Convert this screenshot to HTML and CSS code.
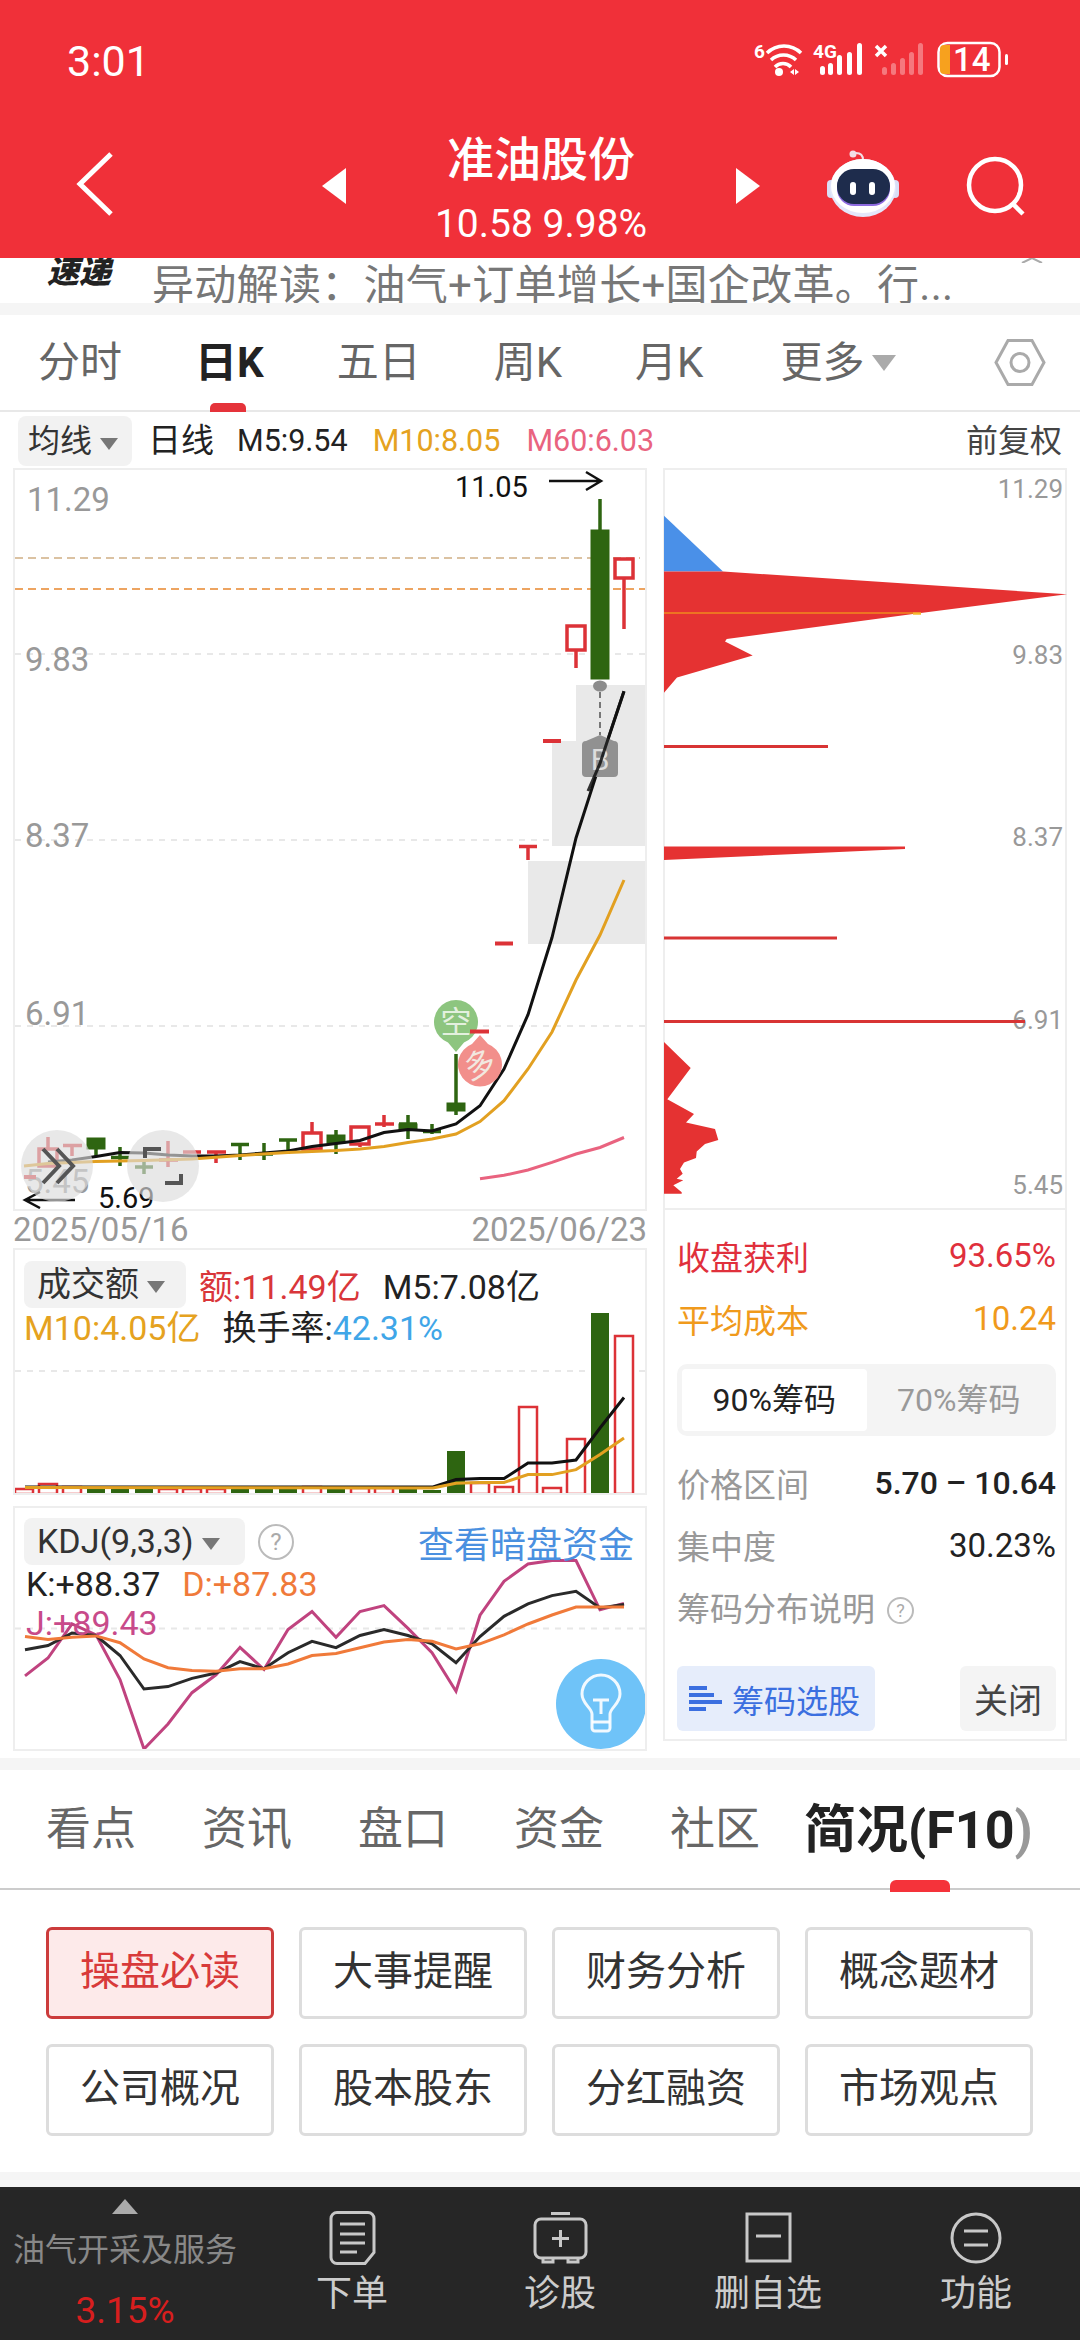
FILE: index.html
```html
<!DOCTYPE html>
<html lang="zh">
<head>
    <meta charset="UTF-8">
    <meta name="viewport" content="width=device-width, initial-scale=1.0">
    <title>准油股份</title>
    <link rel="stylesheet" href="styles.css">
</head>
<body>
<div class="page">
    <header class="app-header">
        <div class="status-bar">
            <span class="status-time">3:01</span>
            <svg class="status-icons" viewBox="754 40 255 38" width="255" height="38">
                <text class="st-small" x="754" y="58">6</text>
                <g fill="none" stroke="#fff" stroke-width="3.500">
                    <path d="M767 53 A24 24 0 0 1 801 53"/>
                    <path d="M771 60 A18 18 0 0 1 796 60"/>
                    <path d="M775 67 A11 11 0 0 1 791 67"/>
                </g>
                <circle cx="779" cy="72" r="4" fill="#fff"/>
                <path d="M790 72l4-3v6zM799 72l-4-3v6z" fill="#fff"/>
                <text class="st-small" x="813" y="58">4G</text>
                <g fill="#fff">
                    <rect x="820" y="66" width="5" height="9" rx="2.500"/>
                    <rect x="828" y="63" width="5" height="12" rx="2.500"/>
                    <rect x="837" y="55" width="5" height="20" rx="2.500"/>
                    <rect x="847" y="52" width="5" height="23" rx="2.500"/>
                    <rect x="857" y="43" width="5" height="32" rx="2.500"/>
                </g>
                <path d="M876 46l10 10M886 46l-10 10" stroke="#fff" stroke-width="3.500"/>
                <g fill="#fff" opacity="0.35">
                    <rect x="882" y="67" width="5" height="8" rx="2.500"/>
                    <rect x="891" y="63" width="5" height="12" rx="2.500"/>
                    <rect x="900" y="58" width="5" height="17" rx="2.500"/>
                    <rect x="909" y="52" width="5" height="23" rx="2.500"/>
                    <rect x="918" y="43" width="5" height="32" rx="2.500"/>
                </g>
                <rect x="938.500" y="43" width="61" height="33" rx="9" fill="none" stroke="#fff" stroke-width="2.500"/>
                <path d="M950 45v29h-6a4 4 0 0 1-4-4V49a4 4 0 0 1 4-4z" fill="#f7a11e"/>
                <text class="st-batt" x="953" y="71">14</text>
                <rect x="1005" y="54" width="3" height="11" rx="1.500" fill="#fff"/>
            </svg>
        </div>
        <nav class="nav-bar">
            <svg class="nav-back" viewBox="0 0 40 66" width="40" height="66"><path d="M35 3L4 33l31 30" fill="none" stroke="#fff" stroke-width="5"/></svg>
            <svg class="nav-prev" viewBox="0 0 24 36" width="24" height="36"><path d="M24 0v36L0 18z" fill="#fff"/></svg>
            <div class="nav-title">
                <div class="stock-name">准油股份</div>
                <div class="stock-price">10.58 9.98%</div>
            </div>
            <svg class="nav-next" viewBox="0 0 24 36" width="24" height="36"><path d="M0 0v36l24-18z" fill="#fff"/></svg>
            <svg class="nav-robot" viewBox="825 148 72 70" width="72" height="70">
                <circle cx="851" cy="154" r="3.500" fill="#f3dfe6"/>
                <path d="M854 153c4 0 7 2 7 7" fill="none" stroke="#f3dfe6" stroke-width="2"/>
                <rect x="825" y="180" width="8" height="18" rx="4" fill="#d9def5"/>
                <rect x="889" y="180" width="8" height="18" rx="4" fill="#d9def5"/>
                <ellipse cx="861" cy="188" rx="33" ry="29" fill="#e4e7fb"/>
                <ellipse cx="861" cy="186" rx="32" ry="27" fill="#fff"/>
                <rect x="835" y="170" width="53" height="36" rx="17" fill="#8e6be0"/>
                <rect x="835" y="169" width="53" height="35" rx="17" fill="#1e2c4c"/>
                <rect x="848" y="182" width="6" height="13" rx="3" fill="#fff"/>
                <rect x="867" y="182" width="6" height="13" rx="3" fill="#fff"/>
            </svg>
            <svg class="nav-search" viewBox="0 0 64 62" width="64" height="62"><circle cx="30" cy="29" r="26" fill="none" stroke="#fff" stroke-width="4.500"/><path d="M47 47l11 11" stroke="#fff" stroke-width="4.500"/></svg>
        </nav>
    </header>

    <div class="news-strip">
        <span class="news-logo">速递</span>
        <span class="news-text">异动解读：油气+订单增长+国企改革。行...</span>
        <svg class="news-chevron" viewBox="0 0 24 5" width="24" height="5"><path d="M2 5L12 0l10 5" fill="none" stroke="#aaa" stroke-width="2"/></svg>
    </div>
    <div class="band band-top"></div>

    <div class="period-tabs">
        <span class="period-tab">分时</span>
        <span class="period-tab period-tab-active">日K</span>
        <span class="period-tab">五日</span>
        <span class="period-tab">周K</span>
        <span class="period-tab">月K</span>
        <span class="period-tab period-more">更多<i class="tri tri-tab"></i></span>
        <svg class="period-gear" viewBox="0 0 52 49" width="52" height="49">
            <path d="M2 24.500L14 2.500h24l12 22-12 22H14z" fill="none" stroke="#aaa" stroke-width="3"/>
            <circle cx="26" cy="24.500" r="9" fill="none" stroke="#aaa" stroke-width="3"/>
        </svg>
    </div>

    <div class="ma-row">
        <span class="chip chip-ma">均线<i class="tri tri-chip"></i></span>
        <span class="ma-day">日线</span>
        <span class="ma-item ma-m5">M5:9.54</span>
        <span class="ma-item ma-m10">M10:8.05</span>
        <span class="ma-item ma-m60">M60:6.03</span>
        <span class="ma-adjust">前复权</span>
    </div>

    <section class="market">
        <div class="col-left">
            <div class="panel panel-price">
                <svg class="chart" viewBox="15 470 630 739" width="630" height="739">
                    <g class="grid">
                        <path d="M15 654H645M15 840H645M15 1026H645"/>
                    </g>
                    <path d="M15 558H640" class="level-tan"/>
                    <path d="M15 589H645" class="level-orange"/>
                    <g class="axis-label">
                        <text x="27" y="499">11.29</text>
                        <text x="25" y="659">9.83</text>
                        <text x="25" y="835">8.37</text>
                        <text x="25" y="1013">6.91</text>
                        <text x="25" y="1181">5.45</text>
                    </g>
                    <g fill="#e9e9e9">
                        <rect x="576" y="685" width="71" height="56"/>
                        <rect x="552" y="741" width="95" height="105"/>
                        <rect x="528" y="861" width="119" height="83"/>
                    </g>
                    <g class="candle-up">
                        <path d="M624 578V629"/><rect x="615" y="559" width="18" height="19"/>
                        <path d="M576 650V668"/><rect x="567" y="626" width="18" height="24"/>
                        <path d="M543 741H561M495 943.500H513M24 1177H36" class="flat"/>
                        <path d="M519 846.500H537M528 846.500V860"/>
                        <path d="M375 1124H394M384 1115V1127"/>
                        <path d="M360 1144V1147"/><rect x="351" y="1127" width="18" height="17"/>
                        <path d="M312 1122V1132"/><rect x="303" y="1133" width="18" height="16"/>
                        <path d="M207 1152H226M216 1152V1163"/>
                        <path d="M183 1152H201"/>
                        <path d="M159 1160H178M168 1141V1167"/>
                        <path d="M63 1145.500H82M72 1145.500V1156"/>
                        <path d="M48 1137V1149"/><rect x="39" y="1149" width="18" height="17"/>
                    </g>
                    <g class="candle-down">
                        <path d="M600 499V530"/><rect x="591" y="530" width="18" height="149"/>
                        <path d="M456 1054V1115"/><rect x="447" y="1103" width="18" height="8"/>
                        <path d="M423 1131.500H441M432 1124V1134"/>
                        <path d="M399 1124H417M408 1115V1139"/><rect x="399" y="1124" width="18" height="6"/>
                        <path d="M336 1130V1154"/><rect x="327" y="1135" width="18" height="8"/>
                        <path d="M279 1140H297M288 1140V1154"/>
                        <path d="M255 1154H273M264 1143V1160"/>
                        <path d="M231 1144.500H249M240 1144.500V1160"/>
                        <path d="M135 1167H153M144 1160V1174"/>
                        <path d="M111 1157.500H129M120 1147V1166"/>
                        <path d="M96 1149V1157"/><rect x="87" y="1138" width="18" height="11"/>
                    </g>
                    <polyline class="line-ma5" points="48,1162 72,1160 96,1156.400 120,1152.400 144,1153 168,1155 192,1156 216,1156 240,1155 264,1153 288,1151 312,1146.500 336,1143.500 360,1140.500 384,1132.500 408,1129.500 432,1131 456,1124 480,1105.700 504,1069 528,1014.600 552,937.500 576,838 600,763.400 624,691.300"/>
                    <polyline class="line-ma10" points="24,1166 48,1163.400 96,1161.400 144,1160.400 192,1159 240,1155.400 288,1152.400 336,1150.500 360,1149 384,1146.500 408,1142.500 432,1139 456,1134 480,1121.600 504,1100.700 528,1069 552,1032 576,980 600,935 624,880"/>
                    <polyline class="line-ma60" points="480,1178.800 504,1175.300 528,1170 552,1162.400 576,1154 600,1147.500 624,1137.500"/>

                    <ellipse cx="600" cy="686" rx="7" ry="5.500" fill="#8c8c8c"/>
                    <path d="M600 692V735" stroke="#777" stroke-width="2" stroke-dasharray="6 4"/>
                    <path d="M586 741l14-6 14 6a4 4 0 0 1 4 4v28a4 4 0 0 1-4 4h-28a4 4 0 0 1-4-4v-28a4 4 0 0 1 4-4z" fill="#8c8c8c" opacity="0.95"/>
                    <text class="mark-b" x="600" y="759">B</text>
                    <polyline class="line-ma5" points="588,791 600,763.400 612,727 624,691.300" opacity="0.85"/>

                    <text class="extreme" x="455" y="487">11.05</text>
                    <path d="M549 481H600M586 472l15 9-15 9" class="arrow"/>
                    <text class="extreme" x="98" y="1198">5.69</text>
                    <path d="M75 1200H26M40 1192l-15 8 15 8" class="arrow"/>

                    <path d="M456 1052l-8-9.500a22 22 0 1 1 16 0z" fill="#8dc57f"/>
                    <text class="mark-badge" x="456" y="1022">空</text>
                    <path d="M480 1035l8 9a22 22 0 1 1-16 0z" fill="#f28f8b"/>
                    <text class="mark-badge" x="480" y="1065" transform="rotate(-20 480 1065)">多</text>
                    <path d="M470 1031.500H489" class="flat-top"/>

                    <circle cx="57" cy="1166" r="36" class="over-circle"/>
                    <circle cx="163" cy="1166" r="36" class="over-circle"/>
                    <path d="M43 1149l16 17-16 17M57 1149l16 17-16 17" class="over-glyph"/>
                    <path d="M145 1158v-9h16M181 1174v9h-16" class="over-glyph"/>
                </svg>
            </div>
            <div class="date-row"><span>2025/05/16</span><span>2025/06/23</span></div>
            <div class="panel panel-volume">
                <svg class="chart" viewBox="15 1250 630 243" width="630" height="243">
                    <path class="grid-line" d="M15 1371H645"/>
                    <g class="vol-up">
                        <rect x="15" y="1489" width="18" height="5"/><rect x="39" y="1484" width="18" height="10"/><rect x="63" y="1487" width="18" height="7"/>
                        <rect x="159" y="1489" width="18" height="5"/><rect x="183" y="1489" width="18" height="5"/><rect x="207" y="1489" width="18" height="5"/>
                        <rect x="303" y="1487" width="18" height="7"/><rect x="351" y="1488" width="18" height="6"/><rect x="375" y="1488" width="18" height="6"/>
                        <rect x="471" y="1483" width="18" height="11"/><rect x="495" y="1487" width="18" height="7"/><rect x="519" y="1407" width="18" height="87"/>
                        <rect x="543" y="1488" width="18" height="6"/><rect x="567" y="1439" width="18" height="55"/><rect x="615" y="1336" width="18" height="158"/>
                    </g>
                    <g fill="#2e6511">
                        <rect x="87" y="1488" width="18" height="6"/><rect x="111" y="1488" width="18" height="6"/><rect x="135" y="1488" width="18" height="6"/>
                        <rect x="231" y="1488" width="18" height="6"/><rect x="255" y="1488" width="18" height="6"/><rect x="279" y="1488" width="18" height="6"/>
                        <rect x="327" y="1487" width="18" height="7"/><rect x="399" y="1488" width="18" height="6"/><rect x="423" y="1490" width="18" height="4"/>
                        <rect x="447" y="1451" width="18" height="43"/><rect x="591" y="1313" width="18" height="181"/>
                    </g>
                    <polyline class="line-ma5" points="25,1487 433,1487 456,1479.600 480,1478.600 504,1478.600 528,1463 552,1463 576,1460 600,1428 624,1397.500"/>
                    <polyline class="line-ma10" points="25,1487.500 433,1488 456,1483.200 480,1482.500 504,1482.500 528,1474.600 552,1474.600 576,1469.600 600,1454.600 624,1437.900"/>
                </svg>
                <div class="legend">
                    <div class="legend-row">
                        <span class="chip chip-vol">成交额<i class="tri tri-chip"></i></span>
                        <span class="c-red">额:11.49亿</span>
                        <span class="c-dark">M5:7.08亿</span>
                    </div>
                    <div class="legend-row legend-row-b">
                        <span class="c-gold">M10:4.05亿</span>
                        <span class="c-dark">换手率:<span class="c-sky">42.31%</span></span>
                    </div>
                </div>
            </div>
            <div class="panel panel-kdj">
                <svg class="chart" viewBox="15 1508 630 241" width="630" height="241">
                    <path class="grid-line" d="M15 1628.600H645"/>
                    <polyline class="kdj kdj-j" points="25,1675.900 48,1658 72,1624 96,1634.800 120,1679.500 144,1749 168,1724 192,1692.700 216,1674.800 240,1647.300 264,1669.500 288,1629.500 312,1611.600 336,1637.300 360,1611.600 384,1605.600 408,1628.400 432,1652.700 456,1691.200 480,1615.200 504,1581.300 528,1564 552,1560.600 576,1560.600 600,1609.800 624,1603.400"/>
                    <polyline class="kdj kdj-k" points="25,1649.800 48,1645.500 72,1633 96,1635.500 120,1655.500 144,1689 168,1686.600 192,1678.400 216,1673 240,1661.600 264,1668.700 288,1652.700 312,1641.300 336,1647.700 360,1635.500 384,1629.500 408,1635.500 432,1643.800 456,1662.700 480,1636.600 504,1616.300 528,1603.800 552,1595.600 576,1591.300 600,1608 624,1604.500"/>
                    <polyline class="kdj kdj-d" points="25,1636.600 48,1639.500 72,1637.300 96,1635.900 120,1642.700 144,1659 168,1667.700 192,1670.500 216,1671.200 240,1668.700 264,1668.700 288,1664 312,1655.500 336,1653.400 360,1647.700 384,1642 408,1639.500 432,1641.300 456,1649 480,1643.800 504,1634.800 528,1624 552,1615 576,1607 600,1607 624,1607"/>
                    <circle cx="601" cy="1704" r="45" fill="#6fc3f8"/>
                    <path d="M592 1714c0-6-10-10-10-20a19 19 0 0 1 38 0c0 10-10 14-10 20v14a3 3 0 0 1-3 3h-12a3 3 0 0 1-3-3z" fill="none" stroke="#fff" stroke-width="3" opacity="0.9"/>
                    <path d="M593 1700h16M601 1700v14M592 1722h18" fill="none" stroke="#fff" stroke-width="3" opacity="0.9"/>
                </svg>
                <div class="legend">
                    <div class="legend-row kdj-head">
                        <span class="chip chip-kdj">KDJ(9,3,3)<i class="tri tri-chip"></i></span>
                        <span class="help help-big">?</span>
                        <span class="dark-pool">查看暗盘资金</span>
                    </div>
                    <div class="legend-row kdj-vals">
                        <span class="c-dark">K:+88.37</span>
                        <span class="c-coral">D:+87.83</span>
                    </div>
                    <div class="legend-row kdj-vals kdj-j-row">
                        <span class="c-plum">J:+89.43</span>
                    </div>
                </div>
            </div>
        </div>

        <div class="col-right">
            <div class="panel panel-chips">
                <svg class="chart chart-chips" viewBox="665 470 400 738" width="400" height="738">
                    <path d="M664 515.700L723 571.400H664z" fill="#4a90e8"/>
                    <g fill="#e53232">
                        <path d="M664 571.400H723L1067 594.300 913 614 726.700 639 725 641.600 752.700 655.500 677 677.400 664 692.800z"/>
                        <path d="M664 846.500H905V849L664 860z"/>
                        <path d="M664 1042L690.700 1068 667.300 1099.200 685 1109 694 1114 686 1122.600 715 1129 718.300 1140 705 1144 696.700 1151.400 696 1158 684 1162.400 680 1169 682.700 1173.800 676.700 1178.800 683.300 1180.300 673.300 1185.300 681.700 1192.200V1193.700H664z"/>
                    </g>
                    <path d="M664 613H913" stroke="#f08a1e" stroke-width="1.500"/>
                    <path d="M913 613.500H921" stroke="#f5b82e" stroke-width="2.500"/>
                    <g stroke="#d83434" stroke-width="3">
                        <path d="M664 746.500H828"/>
                        <path d="M664 938H837"/>
                    </g>
                    <g class="axis-label-r">
                        <text x="1063" y="489">11.29</text>
                        <text x="1063" y="655">9.83</text>
                        <text x="1063" y="837">8.37</text>
                        <text x="1063" y="1020">6.91</text>
                        <text x="1063" y="1185">5.45</text>
                    </g>
                    <path d="M664 1021.600H1025" stroke="#d83434" stroke-width="3"/>
                </svg>
            </div>
            <div class="panel panel-stats">
                <div class="stat-row c-stat-red"><span>收盘获利</span><span>93.65%</span></div>
                <div class="stat-row c-stat-orange"><span>平均成本</span><span>10.24</span></div>
                <div class="toggle">
                    <span class="toggle-item toggle-item-on">90%筹码</span>
                    <span class="toggle-item">70%筹码</span>
                </div>
                <div class="info-rows">
                    <div class="stat-row"><span class="muted">价格区间</span><span class="range">5.70 – 10.64</span></div>
                    <div class="stat-row"><span class="muted">集中度</span><span>30.23%</span></div>
                    <div class="stat-row"><span class="muted">筹码分布说明<span class="help help-small">?</span></span></div>
                </div>
                <div class="stats-actions">
                    <span class="btn-pick">
                        <svg viewBox="0 0 33 28" width="33" height="28"><path d="M0 3h18M0 10h25M0 17h33M0 24h17" stroke="#3b6fe0" stroke-width="4"/></svg>
                        筹码选股
                    </span>
                    <span class="btn-close">关闭</span>
                </div>
            </div>
        </div>
    </section>
    <div class="band band-mid"></div>

    <div class="sub-tabs">
        <span class="sub-tab">看点</span>
        <span class="sub-tab">资讯</span>
        <span class="sub-tab">盘口</span>
        <span class="sub-tab">资金</span>
        <span class="sub-tab">社区</span>
        <span class="sub-tab sub-tab-active">简况(F10<span class="fade">)</span></span>
    </div>

    <div class="f10-grid">
        <span class="f10-btn f10-btn-on">操盘必读</span>
        <span class="f10-btn">大事提醒</span>
        <span class="f10-btn">财务分析</span>
        <span class="f10-btn">概念题材</span>
        <span class="f10-btn">公司概况</span>
        <span class="f10-btn">股本股东</span>
        <span class="f10-btn">分红融资</span>
        <span class="f10-btn">市场观点</span>
    </div>
    <div class="band band-low"></div>

    <footer class="bottom-bar">
        <div class="sector">
            <i class="sector-up"></i>
            <span class="sector-name">油气开采及服务</span>
            <span class="sector-pct">3.15%</span>
        </div>
        <div class="bar-item">
            <svg viewBox="0 0 47 54" width="47" height="54" class="bar-icon"><path d="M8 1.500h31a6 6 0 0 1 6 6v34l-9 11H8a6 6 0 0 1-6-6v-39a6 6 0 0 1 6-6z"/><path d="M11 13h25M11 23h25M11 32h25M11 41h17"/></svg>
            <span>下单</span>
        </div>
        <div class="bar-item">
            <svg viewBox="0 0 55 52" width="55" height="52" class="bar-icon"><rect x="2" y="7" width="51" height="39" rx="6"/><path d="M18 1.500h19M27.500 18v17M19 26.500h17M10 46v4h10v-4M35 46v4h10v-4"/></svg>
            <span>诊股</span>
        </div>
        <div class="bar-item">
            <svg viewBox="0 0 47 52" width="47" height="52" class="bar-icon"><rect x="2" y="2" width="43" height="47"/><path d="M11 24h25"/></svg>
            <span>删自选</span>
        </div>
        <div class="bar-item">
            <svg viewBox="0 0 52 52" width="52" height="52" class="bar-icon"><circle cx="26" cy="26" r="24"/><path d="M14 19h24M14 33h24"/></svg>
            <span>功能</span>
        </div>
    </footer>
</div>
</body>
</html>
```

FILE: styles.css
```css
* {
    box-sizing: border-box;
}

body {
    margin: 0;
    background: #fff;
    font-family: Roboto, "Noto Sans CJK SC", sans-serif;
    color: #222;
}

.page {
    width: 1080px;
    height: 2340px;
    overflow: hidden;
}

/* header */
.app-header {
    height: 258px;
    background: #f03039;
    color: #fff;
}

.status-bar {
    height: 122px;
    padding: 40px 71px 0 67px;
    display: flex;
    justify-content: space-between;
    align-items: flex-start;
}

.status-time {
    font-size: 43px;
    line-height: 42px;
}

.status-icons {
    overflow: visible;
}

.st-small {
    fill: #fff;
    font-size: 19px;
    font-weight: 700;
}

.st-batt {
    fill: #fff;
    font-size: 33px;
    font-weight: 500;
}

.nav-bar {
    height: 136px;
    display: flex;
    align-items: flex-start;
    position: relative;
}

.nav-back {
    margin: 29px 0 0 76px;
}

.nav-prev {
    margin: 46px 0 0 206px;
}

.nav-title {
    width: 390px;
    text-align: center;
}

.stock-name {
    font-size: 47px;
    font-weight: 500;
    line-height: 66px;
    margin-top: 5px;
}

.stock-price {
    font-size: 39px;
    line-height: 52px;
    margin-top: 5px;
}

.nav-next {
    margin-top: 46px;
}

.nav-robot {
    margin: 26px 0 0 67px;
}

.nav-search {
    margin: 34px 0 0 66px;
}

/* news */
.news-strip {
    height: 45px;
    overflow: hidden;
    display: flex;
    align-items: flex-start;
}

.news-logo {
    margin: -9px 0 0 47px;
    width: 105px;
    font-size: 32px;
    font-weight: 900;
    font-style: italic;
    line-height: 46px;
    color: #222;
}

.news-text {
    margin-top: 3px;
    font-size: 42px;
    letter-spacing: 0.3px;
    line-height: 50px;
    color: #777;
    white-space: nowrap;
}

.news-chevron {
    margin-left: auto;
    margin-right: 36px;
}

.band {
    background: #f5f5f5;
}

.band-top {
    height: 12px;
}

.band-mid {
    height: 12px;
}

.band-low {
    height: 15px;
}

/* period tabs */
.period-tabs {
    height: 97px;
    padding-left: 38px;
    display: flex;
    gap: 73px;
    align-items: center;
    border-bottom: 2px solid #e8e8e8;
    position: relative;
}

.period-tab {
    font-size: 42px;
    line-height: 50px;
    color: #666;
    position: relative;
}

.period-tab-active {
    color: #222;
    font-weight: 700;
}

.period-tab-active::after {
    content: "";
    position: absolute;
    left: 15px;
    bottom: -24px;
    width: 36px;
    height: 9px;
    border-radius: 5px 5px 0 0;
    background: #e5333a;
}

.period-more {
    display: flex;
    align-items: center;
    margin-left: 4px;
}

.period-gear {
    position: absolute;
    left: 994px;
    top: 23px;
}

.tri {
    display: inline-block;
    width: 0;
    height: 0;
    border-style: solid;
    border-color: #777 transparent transparent;
}

.tri-tab {
    margin-left: 8px;
    border-width: 16px 12px 0;
    border-top-color: #aaa;
}

.tri-chip {
    margin-left: 8px;
    vertical-align: middle;
    border-width: 12px 9px 0;
}

/* ma row */
.ma-row {
    height: 56px;
    padding: 4px 18px 0;
    display: flex;
    align-items: flex-start;
    font-size: 32px;
    line-height: 50px;
}

.chip {
    background: #f2f2f2;
    border-radius: 8px;
    height: 47px;
    line-height: 47px;
    white-space: nowrap;
}

.chip-ma {
    width: 114px;
    height: 50px;
    line-height: 50px;
    padding-left: 10px;
    color: #333;
}

.ma-day {
    margin-left: 16px;
    font-size: 33px;
}

.ma-item {
    font-size: 30.500px;
}

.ma-m5 {
    margin-left: 23px;
}

.ma-m10 {
    margin-left: 25px;
    color: #e5a220;
}

.ma-m60 {
    margin-left: 26px;
    color: #e9637f;
}

.ma-adjust {
    margin-left: auto;
    color: #444;
}

/* chart columns */
.market {
    height: 1290px;
    padding-left: 13px;
    display: flex;
    gap: 16px;
    align-items: flex-start;
}

.col-left {
    width: 634px;
}

.col-right {
    width: 404px;
}

.panel {
    border: 2px solid #eee;
    position: relative;
    background: #fff;
}

.chart {
    display: block;
}

.chart-chips {
    overflow: visible;
}

.panel-price {
    height: 743px;
}

.panel-volume {
    height: 247px;
}

.panel-kdj {
    height: 245px;
    margin-top: 11px;
}

.panel-chips {
    height: 742px;
}

.panel-stats {
    height: 531px;
    border-top: 0;
    padding: 14px 9px 0 12px;
    font-size: 33px;
}

.grid path,
.grid-line {
    fill: none;
    stroke: #e8e8e8;
    stroke-width: 2;
    stroke-dasharray: 6 6;
}

.level-tan {
    stroke: #cfaf84;
    stroke-width: 1.500;
    stroke-dasharray: 8 5;
}

.level-orange {
    stroke: #e8872e;
    stroke-width: 1.500;
    stroke-dasharray: 8 5;
}

.axis-label text {
    font-size: 33px;
    fill: #999;
    dominant-baseline: central;
}

.axis-label-r text {
    font-size: 26px;
    fill: #999;
    text-anchor: end;
    dominant-baseline: central;
}

.candle-up path,
.candle-up rect {
    fill: none;
    stroke: #dc3237;
    stroke-width: 3.500;
}

.candle-up .flat,
.flat-top {
    stroke: #dc3237;
    stroke-width: 4;
}

.candle-down path {
    fill: none;
    stroke: #2e6511;
    stroke-width: 3.500;
}

.candle-down rect {
    fill: #2e6511;
    stroke: #2e6511;
    stroke-width: 1;
}

.vol-up rect {
    fill: #fff;
    stroke: #dc3237;
    stroke-width: 2.500;
}

.line-ma5,
.line-ma10,
.line-ma60 {
    fill: none;
    stroke-width: 3;
}

.line-ma5 {
    stroke: #111;
}

.line-ma10 {
    stroke: #e2a021;
}

.line-ma60 {
    stroke: #e9637f;
}

.mark-b {
    font-size: 30px;
    fill: #ddd;
    text-anchor: middle;
    dominant-baseline: central;
}

.mark-badge {
    font-size: 31px;
    fill: #f3f8ef;
    opacity: 0.85;
    text-anchor: middle;
    dominant-baseline: central;
}

.extreme {
    font-size: 29px;
    fill: #111;
    dominant-baseline: central;
}

.arrow {
    fill: none;
    stroke: #111;
    stroke-width: 2.500;
}

.over-circle {
    fill: #dcdcdc;
    opacity: 0.65;
}

.over-glyph {
    fill: none;
    stroke: #555;
    stroke-width: 4;
}

.date-row {
    height: 37px;
    display: flex;
    justify-content: space-between;
    font-size: 33px;
    line-height: 37px;
    color: #999;
}

/* legends on top of the small charts */
.legend {
    position: absolute;
    left: 9px;
    top: 10px;
    right: 9px;
    font-size: 34px;
}

.legend-row {
    display: flex;
    gap: 22px;
    align-items: center;
}

.legend-row-b {
    height: 34px;
    margin-top: -1px;
}

.chip-vol {
    width: 162px;
    padding-left: 13px;
    margin-right: -9px;
    color: #333;
}

.chip-kdj {
    width: 221px;
    padding-left: 13px;
    margin-right: -9px;
    color: #333;
}

.kdj-head .dark-pool {
    margin-left: auto;
    color: #4a90e0;
    font-size: 36px;
    margin-right: 2px;
}

.kdj-vals {
    padding-left: 2px;
    height: 40px;
    line-height: 40px;
}

.kdj-head {
    height: 47px;
    margin-bottom: -1px;
}

.kdj-j-row {
    margin-top: -1px;
}

.c-red {
    color: #d9363a;
}

.c-dark {
    color: #222;
}

.c-gold {
    color: #e5a220;
}

.c-sky {
    color: #3fa6e8;
}

.c-coral {
    color: #f07a3a;
}

.c-plum {
    color: #c84a8a;
}

.kdj {
    fill: none;
    stroke-width: 3;
}

.kdj-k {
    stroke: #2a2a2a;
}

.kdj-d {
    stroke: #f07a3a;
}

.kdj-j {
    stroke: #c0437f;
}

.help {
    display: inline-block;
    border-radius: 50%;
    text-align: center;
    color: #aaa;
    border: 2px solid #bbb;
}

.help-big {
    width: 36px;
    height: 36px;
    line-height: 32px;
    font-size: 24px;
}

.help-small {
    width: 27px;
    height: 27px;
    line-height: 23px;
    font-size: 18px;
    margin-left: 12px;
    vertical-align: 4px;
}

/* stats under the chip chart */
.stat-row {
    height: 63px;
    display: flex;
    justify-content: space-between;
    align-items: center;
}

.c-stat-red {
    color: #e0303c;
}

.c-stat-orange {
    color: #f09a1c;
}

.toggle {
    margin-top: 14px;
    height: 72px;
    padding: 5px;
    display: flex;
    background: #f4f4f4;
    border-radius: 10px;
    font-size: 32px;
}

.toggle-item {
    width: 185px;
    text-align: center;
    line-height: 62px;
    border-radius: 4px;
    color: #999;
    white-space: nowrap;
}

.toggle-item-on {
    background: #fff;
    color: #222;
}

.info-rows {
    margin-top: 16px;
}

.info-rows .stat-row {
    height: 62px;
}

.muted {
    color: #999;
}

.range {
    font-weight: 500;
    font-size: 32px;
}

.stats-actions {
    margin-top: 28px;
    display: flex;
    justify-content: space-between;
}

.btn-pick,
.btn-close {
    height: 65px;
    border-radius: 6px;
    display: flex;
    align-items: center;
}

.btn-pick {
    width: 198px;
    padding-left: 12px;
    gap: 10px;
    background: #e6edfb;
    color: #3b6fe0;
    white-space: nowrap;
    font-size: 32px;
}

.btn-close {
    width: 96px;
    justify-content: center;
    background: #f4f4f4;
    color: #444;
    font-size: 34px;
}

/* lower tabs */
.sub-tabs {
    height: 120px;
    padding: 0 0 8px 46px;
    display: flex;
    align-items: center;
    border-bottom: 2px solid #ccc;
    position: relative;
}

.sub-tab {
    font-size: 45px;
    color: #666;
    white-space: nowrap;
}

.sub-tab + .sub-tab {
    margin-left: 66px;
}

.sub-tabs .sub-tab-active {
    margin-left: 44px;
    font-size: 52px;
    font-weight: 700;
    color: #222;
    position: relative;
}

.sub-tab-active::after {
    content: "";
    position: absolute;
    left: 86px;
    bottom: -29px;
    width: 60px;
    height: 12px;
    border-radius: 6px 6px 0 0;
    background: #f5333a;
}

.fade {
    color: #999;
}

.f10-grid {
    height: 282px;
    padding: 37px 0 0 46px;
    display: grid;
    grid-template-columns: repeat(4, 228px);
    grid-auto-rows: 92px;
    gap: 25px;
}

.f10-btn {
    border: 3px solid #ddd;
    border-radius: 6px;
    font-size: 40px;
    line-height: 84px;
    text-align: center;
    color: #333;
}

.f10-btn-on {
    border-color: #cc3c3c;
    background: #fdeaea;
    color: #d83a3a;
}

/* bottom bar */
.bottom-bar {
    height: 153px;
    background: #262626;
    display: flex;
    color: #ccc;
}

.sector {
    width: 248px;
    display: flex;
    flex-direction: column;
    align-items: center;
    padding-left: 2px;
}

.sector-up {
    margin-top: 12px;
    border-style: solid;
    border-width: 0 13px 15px;
    border-color: transparent transparent #aaa;
}

.sector-name {
    margin-top: 16px;
    font-size: 32px;
    line-height: 40px;
    color: #888;
    white-space: nowrap;
}

.sector-pct {
    margin-top: 19px;
    font-size: 37px;
    line-height: 44px;
    color: #d81e1e;
}

.bar-item {
    width: 208px;
    display: flex;
    flex-direction: column;
    align-items: center;
    font-size: 36px;
}

.bar-item span {
    line-height: 44px;
}

.bar-item .bar-icon {
    margin-top: 24px;
    margin-bottom: 7px;
    height: 54px;
    fill: none;
    stroke: #c8c8c8;
    stroke-width: 3;
}
```
